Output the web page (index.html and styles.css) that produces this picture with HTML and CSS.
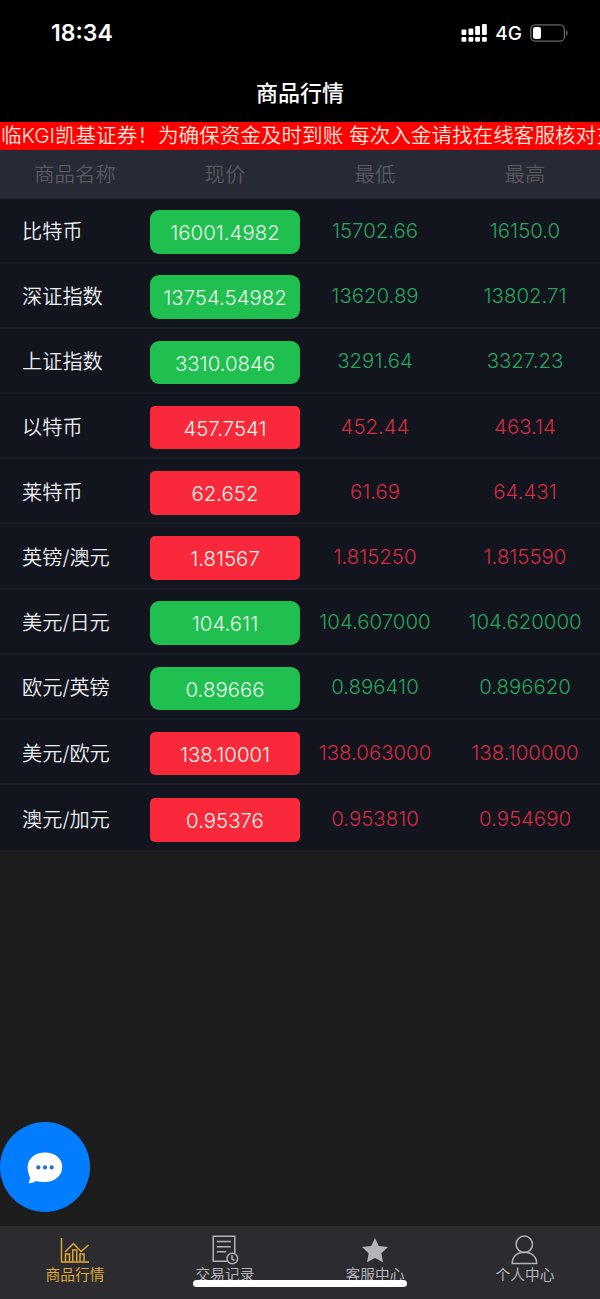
FILE: index.html
```html
<!DOCTYPE html>
<html lang="zh-CN">
  <head>
    <meta charset="utf-8">
    <meta name="viewport" content="width=device-width,initial-scale=1.0">
    <title>商品行情</title>
    <link rel="stylesheet" href="styles.css">
  </head>
  <body>
    <div id="app">
      <div class="statusbar">
        <span class="time">18:34</span>
        <div class="status-icons">
          <svg class="signal" width="26" height="19" viewBox="0 0 26 19" fill="#fff">
            <rect x="0.5" y="5.500" width="4.800" height="5.500" rx="1"/>
            <rect x="7.500" y="4.500" width="4.800" height="6.500" rx="1"/>
            <rect x="14.200" y="2" width="4.800" height="9" rx="1"/>
            <rect x="21" y="0" width="4.800" height="11" rx="1"/>
            <rect x="0.500" y="13" width="4.800" height="4.800" rx="1.300"/>
            <rect x="7.500" y="13" width="4.800" height="4.800" rx="1.300"/>
            <rect x="14.200" y="13" width="4.800" height="4.800" rx="1.300"/>
            <rect x="21" y="13" width="4.800" height="4.800" rx="1.300"/>
          </svg>
          <span class="network">4G</span>
          <svg class="battery" width="39" height="18" viewBox="0 0 39 18">
            <rect x="0.8" y="0.8" width="33.6" height="16.4" rx="4.5" fill="none" stroke="#666" stroke-width="1.3"/>
            <rect x="3" y="3" width="8" height="12" rx="2.2" fill="#fff"/>
            <path d="M36.2 6.2c1.9 .8 1.9 4.8 0 5.6z" fill="#666"/>
          </svg>
        </div>
      </div>
      <header class="navbar">商品行情</header>
      <div class="notice"><span>临KGI凯基证券！为确保资金及时到账 每次入金请找在线客服核对充</span></div>

      <div class="list-head">
        <span>商品名称</span>
        <span>现价</span>
        <span>最低</span>
        <span>最高</span>
      </div>
      <div class="list">
        <div class="row up">
          <span class="name">比特币</span>
          <span class="price">16001.4982</span>
          <span class="num">15702.66</span>
          <span class="num">16150.0</span>
        </div>
        <div class="row up">
          <span class="name">深证指数</span>
          <span class="price">13754.54982</span>
          <span class="num">13620.89</span>
          <span class="num">13802.71</span>
        </div>
        <div class="row up">
          <span class="name">上证指数</span>
          <span class="price">3310.0846</span>
          <span class="num">3291.64</span>
          <span class="num">3327.23</span>
        </div>
        <div class="row down">
          <span class="name">以特币</span>
          <span class="price">457.7541</span>
          <span class="num">452.44</span>
          <span class="num">463.14</span>
        </div>
        <div class="row down">
          <span class="name">莱特币</span>
          <span class="price">62.652</span>
          <span class="num">61.69</span>
          <span class="num">64.431</span>
        </div>
        <div class="row down">
          <span class="name">英镑/澳元</span>
          <span class="price">1.81567</span>
          <span class="num">1.815250</span>
          <span class="num">1.815590</span>
        </div>
        <div class="row up">
          <span class="name">美元/日元</span>
          <span class="price">104.611</span>
          <span class="num">104.607000</span>
          <span class="num">104.620000</span>
        </div>
        <div class="row up">
          <span class="name">欧元/英镑</span>
          <span class="price">0.89666</span>
          <span class="num">0.896410</span>
          <span class="num">0.896620</span>
        </div>
        <div class="row down">
          <span class="name">美元/欧元</span>
          <span class="price">138.10001</span>
          <span class="num">138.063000</span>
          <span class="num">138.100000</span>
        </div>
        <div class="row down">
          <span class="name">澳元/加元</span>
          <span class="price">0.95376</span>
          <span class="num">0.953810</span>
          <span class="num">0.954690</span>
        </div>
      </div>

      <nav class="tabbar">
        <a class="tab active">
          <svg width="30" height="30" viewBox="0 0 30 30" fill="none" stroke="currentColor" stroke-width="1.5">
            <path d="M1.500 3v24h27.500"/>
            <path d="M5.500 26.500v-7.500h4v7.500M12.700 26.500v-11.500h4v11.500M20 26.500v-7.500h4v7.500"/>
            <path d="M5 17l8.500-8.500 7.500 8 7.500-6.500"/>
          </svg>
          <span>商品行情</span>
        </a>
        <a class="tab">
          <svg width="30" height="30" viewBox="0 0 30 30" fill="none" stroke="currentColor" stroke-width="1.5">
            <path d="M17 26.300H3.200V1.200h21.600v17"/>
            <path d="M6.800 6.500h14M6.800 11.700h14M6.800 16.700h9.500"/>
            <circle cx="22.300" cy="23.500" r="5.300"/>
            <path d="M22 20.200v3.800l2.500 1.500"/>
          </svg>
          <span>交易记录</span>
        </a>
        <a class="tab">
          <svg width="30" height="30" viewBox="0 0 30 30" fill="currentColor">
            <path d="M15 3l3.800 8 9.200 1.100-6.600 6.200L23 27.300l-8-4.300-8 4.300 1.600-9L2 12.100 11.200 11z"/>
          </svg>
          <span>客服中心</span>
        </a>
        <a class="tab">
          <svg width="30" height="30" viewBox="0 0 30 30" fill="none" stroke="currentColor" stroke-width="1.500">
            <circle cx="14.300" cy="9.300" r="8.200"/>
            <path d="M2.200 28.600c0-7 5-11.400 12.100-11.400s12.400 4.400 12.400 11.400z"/>
          </svg>
          <span>个人中心</span>
        </a>
      </nav>
    </div>

    <div class="chat-btn">
      <svg width="36" height="32" viewBox="0 0 36 32">
        <path d="M18 .5C8.300 .5 .6 6.500 .6 15c0 4.500 1.500 8 2.300 10 .2 2-.4 4.200-1.400 6.200 3.500 0 6-1.200 7.500-2.200 2.800 .8 5.800 1 9 1 9.700 0 17.200-6.200 17.200-15S27.700 .5 18 .5z" fill="#fff"/>
        <circle cx="11.300" cy="15.400" r="2.100" fill="#2470c8"/>
        <circle cx="18" cy="15.400" r="2.100" fill="#2470c8"/>
        <circle cx="24.700" cy="15.400" r="2.100" fill="#2470c8"/>
      </svg>
    </div>
    <div class="home-indicator"></div>
  </body>
</html>
```
FILE: styles.css
```css
* {
  box-sizing: border-box;
}

body {
  margin: 0;
  padding: 0;
  background: #1c1c1c;
  color: #fff;
  font-family: Inter, "Noto Sans CJK SC", sans-serif;
}

#app {
  display: flex;
  flex-direction: column;
  height: 1299px;
  overflow: hidden;
}

.statusbar {
  flex: none;
  display: flex;
  justify-content: space-between;
  align-items: center;
  height: 66px;
  padding: 0 31px 0 51px;
  background: #000;
}

.time {
  font-size: 23px;
  font-weight: 600;
}

.status-icons {
  display: flex;
  align-items: center;
}

.network {
  margin: 0 8px;
  font-size: 19px;
  font-weight: 500;
}

.navbar {
  flex: none;
  height: 56px;
  background: #000;
  font-size: 22px;
  font-weight: 500;
  line-height: 54px;
  text-align: center;
}

/* Scrolling notice */
.notice {
  flex: none;
  height: 28px;
  padding-left: 1px;
  overflow: hidden;
  background: #fe0000;
  color: #fde6dc;
  font-size: 20.6px;
  font-weight: 350;
  line-height: 27px;
  white-space: nowrap;
}

.list-head,
.row {
  display: grid;
  grid-template-columns: repeat(4, 150px);
  align-items: center;
}

.list-head {
  flex: none;
  height: 48.5px;
  padding-top: 1px;
  background: #272934;
  color: #575860;
  font-size: 20.4px;
  font-weight: 350;
  line-height: 48px;
  text-align: center;
}

.list {
  flex: none;
  background: #12151e;
}

.row {
  height: 65.2px;
  padding-top: 1px;
  border-bottom: 2px solid #1a1d25;
  font-size: 20.4px;
  font-weight: 350;
}

.row:last-child {
  border-bottom: none;
}

.name {
  padding-left: 22px;
  color: #eceef2;
  font-size: 20.2px;
}

.price {
  height: 43.6px;
  margin-top: 3px;
  color: #eaf6ec;
  line-height: 45px;
  text-align: center;
}

.num {
  text-align: center;
}

.up .price {
  border-radius: 9px;
  background: #1fc04f;
}

.down .price {
  border-radius: 5px;
  background: #f9293b;
}

.up .num {
  color: #2aa45c;
}

.down .num {
  color: #d42c41;
}

/* Bottom tabs */
.tabbar {
  flex: none;
  display: grid;
  grid-template-columns: repeat(4, 1fr);
  height: 73px;
  margin-top: auto;
  background: #2b2b30;
}

.tab {
  display: flex;
  flex-direction: column;
  align-items: center;
  padding-top: 9px;
  color: #b4b4b8;
  font-size: 14.7px;
  line-height: 20px;
}

.tab.active {
  color: #dfa836;
}

.chat-btn {
  position: fixed;
  left: 0;
  bottom: 87px;
  z-index: 10;
  display: flex;
  justify-content: center;
  align-items: center;
  width: 90px;
  height: 90px;
  padding-top: 2px;
  border-radius: 50%;
  background: #037dff;
}

.home-indicator {
  position: fixed;
  left: 193px;
  bottom: 12px;
  z-index: 20;
  width: 214px;
  height: 7px;
  border-radius: 4px;
  background: #fff;
}
```
